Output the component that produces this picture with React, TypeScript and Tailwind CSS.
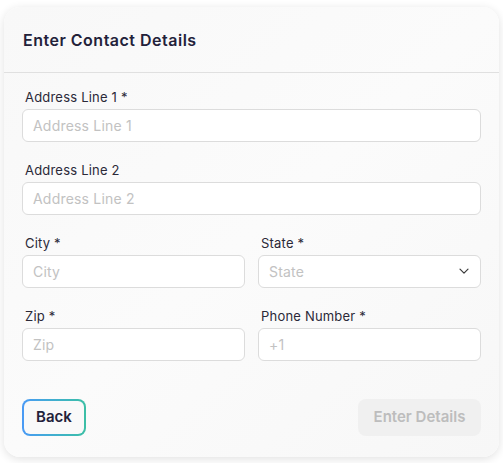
import React from "react";

function Field({ label, placeholder, select }: { label: string; placeholder: string; select?: boolean }) {
  return (
    <div className="flex flex-col min-w-0 flex-1">
      <label className="pl-[3px] text-[13px] leading-[16px] text-[#2b2938] h-[16px] tracking-[0.2px]">{label}</label>
      <div className="relative mt-[4px]">
        <input
          placeholder={placeholder}
          className="w-full h-[33px] rounded-[6px] border border-[#dcdcdc] bg-white pl-[10px] text-[14px] text-[#2b2938] placeholder:text-[#c2c2c2] outline-none tracking-[0.2px]"
          style={{ fontFamily: "Inter, sans-serif" }}
        />
        {select && (
          <svg className="absolute right-[12px] top-[13px]" width="10" height="7" viewBox="0 0 10 7" fill="none">
            <path d="M1 1.2 L5 5.2 L9 1.2" stroke="#3a3a3a" strokeWidth="1.2" strokeLinecap="round" strokeLinejoin="round" />
          </svg>
        )}
      </div>
    </div>
  );
}

export default function App() {
  return (
    <div className="w-[503px] h-[463px] bg-white pt-[7px] pl-[4px]" style={{ fontFamily: "Inter, 'Noto Sans', sans-serif" }}>
      <div className="w-[495px] h-[450px] rounded-[16px] bg-gradient-to-br from-[#f8f8f8] via-[#fbfbfb] to-[#f7f7f7] shadow-[0_2px_10px_rgba(0,0,0,0.12)] flex flex-col">
        <div className="h-[66px] border-b border-[#e0e0e0] flex items-center pl-[19px] pt-[1px]">
          <h1 className="text-[16px] font-semibold text-[#23213a] tracking-[0.5px]">Enter Contact Details</h1>
        </div>
        <div className="flex flex-col px-[18px] pt-[16px] gap-[20px]">
          <Field label="Address Line 1 *" placeholder="Address Line 1" />
          <Field label="Address Line 2" placeholder="Address Line 2" />
          <div className="flex gap-[13px]">
            <Field label="City *" placeholder="City" />
            <Field label="State *" placeholder="State" select />
          </div>
          <div className="flex gap-[13px]">
            <Field label="Zip *" placeholder="Zip" />
            <Field label="Phone Number *" placeholder="+1" />
          </div>
        </div>
        <div className="flex justify-between px-[18px] mt-[38px]">
          <div className="rounded-[8px] p-[2px] bg-gradient-to-r from-[#4a9af5] to-[#3cbfa5]">
            <button className="h-[33px] w-[60px] rounded-[6px] bg-[#f9f9f9] text-[15px] font-semibold text-[#23213a]">Back</button>
          </div>
          <button className="h-[37px] w-[123px] rounded-[8px] bg-[#f0f0f0] text-[15px] font-semibold text-[#bdbdbd]">Enter Details</button>
        </div>
      </div>
    </div>
  );
}
